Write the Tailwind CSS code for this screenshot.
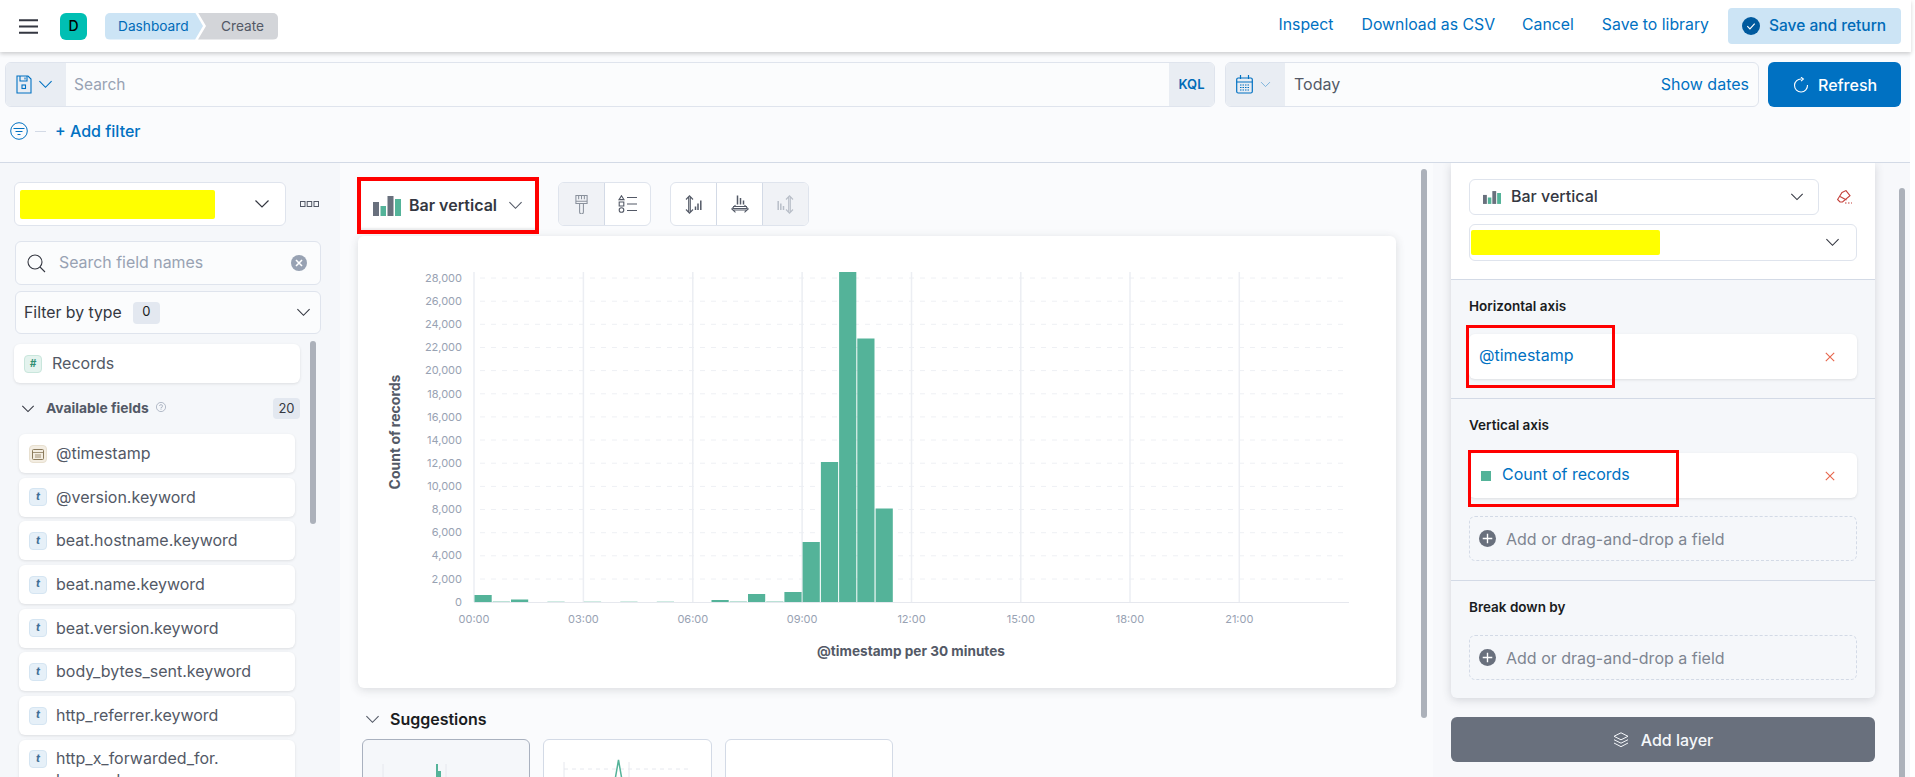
<!DOCTYPE html>
<html lang="en">
<head>
    <meta charset="UTF-8">
    <title>Create - Lens</title>
    <script src="https://cdn.jsdelivr.net/npm/@tailwindcss/browser@4"></script>
</head>
<body class="w-[1915px] h-[777px] overflow-hidden bg-white font-[family-name:Inter,sans-serif] text-[#343741]">

    <!-- icon defs -->
    <svg class="hidden">
        <symbol id="chev" viewBox="0 0 16 16"><path d="M1.5 4.5 8 11l6.5-6.5" fill="none" stroke="currentColor" stroke-width="1.2"/></symbol>
        <symbol id="barsmall" viewBox="0 0 28 20"><rect x="0" y="6" width="6" height="14" fill="#69707d"/><rect x="7.5" y="10" width="5.5" height="10" fill="#54b399"/><rect x="14.5" y="0" width="6" height="20" fill="#69707d"/><rect x="22" y="3" width="6" height="17" fill="#54b399"/></symbol>
        <symbol id="plus" viewBox="0 0 16 16"><circle cx="8" cy="8" r="8" fill="#69707d"/><path d="M8 3.5v9M3.5 8h9" stroke="#fff" stroke-width="1.3"/></symbol>
        <symbol id="cross" viewBox="0 0 10 10"><path d="M.8.8l8.4 8.4M9.2.8.8 9.2" stroke="#e7664c" stroke-width="1.1" fill="none"/></symbol>
    </svg>

    <!-- HEADER -->
    <header class="relative z-20 h-[52px] w-[1911px] bg-white shadow-[0_2px_4px_rgba(0,0,0,0.18)] flex items-center">
        <svg class="ml-[19px] w-[19px] h-[15px]" viewBox="0 0 19 15"><path d="M0 1.2h19M0 7.5h19M0 13.8h19" stroke="#343741" stroke-width="2"/></svg>
        <div class="ml-[22px] w-[27px] h-[27px] rounded-[6px] bg-[#00bfb3] flex items-center justify-center text-[14px] font-medium text-black pb-[2px]">D</div>
        <div class="ml-[18px] flex h-[27px] text-[13.7px]">
            <div class="w-[98px] bg-[#cce4f5] text-[#006bb8] rounded-l-[5px] pl-[13px] flex items-center [clip-path:polygon(0_0,92%_0,100%_50%,92%_100%,0_100%)]">Dashboard</div>
            <div class="-ml-[5px] w-[80px] bg-[#d3d5d9] text-[#535966] rounded-r-[5px] pl-[23px] flex items-center [clip-path:polygon(0_0,100%_0,100%_100%,0_100%,10%_50%)]">Create</div>
        </div>
        <nav class="ml-auto flex items-center text-[15.8px] text-[#0071c2]">
            <a class="mr-[28px] pb-[2px]">Inspect</a>
            <a class="mr-[27px] pb-[2px]">Download as CSV</a>
            <a class="mr-[28px] pb-[2px]">Cancel</a>
            <a class="mr-[19px] pb-[2px]">Save to library</a>
            <div class="w-[173px] h-[36px] mr-[10px] bg-[#cce4f5] text-[#006bb8] rounded-[4px] flex items-center pl-[14px] gap-[9px]">
                <svg class="w-[18px] h-[18px]" viewBox="0 0 17 17"><circle cx="8.5" cy="8.5" r="8.5" fill="#005a9e"/><path d="M5 8.7l2.5 2.5L12 6.2" fill="none" stroke="#fff" stroke-width="1.1"/></svg>
                <span class="text-[15.5px] font-medium">Save and return</span>
            </div>
        </nav>
    </header>

    <div class="w-[1910px] bg-[#fafbfd]">
        <!-- QUERY BAR -->
        <section class="h-[111px] border-b border-[#d3dae6] pt-[10px] pl-[5px]">
            <div class="flex h-[45px]">
                <div class="w-[1210px] flex rounded-[6px] border border-[#dfe4ed] overflow-hidden bg-[#fbfcfd]">
                    <div class="w-[60px] bg-[#e9edf3] flex items-center pl-[10px] gap-[6px] text-[#0071c2]">
                        <svg class="w-[16px] h-[19px]" viewBox="0 0 16 19" fill="none" stroke="currentColor" stroke-width="1.1"><path d="M1 1h11l3 3v14H1z"/><path d="M4 1v5h7V1M9 2.5v2"/><rect x="6" y="10" width="3.5" height="3.5"/></svg>
                        <svg class="w-[15px] h-[15px]"><use href="#chev"/></svg>
                    </div>
                    <div class="flex-1 flex items-center pl-[8px] text-[15.5px] text-[#98a2b3]">Search</div>
                    <div class="w-[45px] bg-[#e9edf3] flex items-center justify-center text-[13px] font-semibold text-[#006bb8]">KQL</div>
                </div>
                <div class="ml-[10px] w-[534px] flex rounded-[6px] border border-[#dfe4ed] overflow-hidden bg-[#fbfcfd]">
                    <div class="w-[59px] bg-[#e9edf3] flex items-center pl-[10px] gap-[7px] text-[#0071c2]">
                        <svg class="w-[17px] h-[19px]" viewBox="0 0 17 19" fill="none" stroke="currentColor" stroke-width="1.2"><rect x=".7" y="3" width="15.6" height="15" rx="1.5"/><path d="M.7 7h15.6M4.5 0v4M12.5 0v4" /><path d="M4 10h9M4 12.5h9M4 15h9" stroke-dasharray="1.5 1"/></svg>
                        <svg class="w-[11px] h-[11px] text-[#69a9d8]"><use href="#chev"/></svg>
                    </div>
                    <div class="flex-1 flex items-center pl-[9px] pb-[1px] text-[16px] text-[#535966]">Today</div>
                    <div class="flex items-center pr-[9px] pb-[1px] text-[16px] text-[#0071c2]">Show dates</div>
                </div>
                <div class="ml-[9px] w-[133px] rounded-[6px] bg-[#0071c2] text-white flex items-center pl-[25px] gap-[9px] text-[16px] font-medium">
                    <svg class="w-[16px] h-[16px]" viewBox="0 0 16 16" fill="none" stroke="currentColor" stroke-width="1.1"><path d="M8.5 2A6.5 6.5 0 1 0 14.5 8"/><path d="M8 .2 10.4 2 8 4.2"/></svg>
                    <span>Refresh</span>
                </div>
            </div>
            <div class="flex items-center mt-[14px] h-[20px] pl-[5px]">
                <svg class="w-[18px] h-[18px]" viewBox="0 0 18 18" fill="none" stroke="#0071c2" stroke-width="1"><circle cx="9" cy="9" r="8.3"/><path d="M3.5 6.5h11M5.5 9.5h7M7.5 12.5h3"/></svg>
                <div class="ml-[7px] w-[11px] h-[1px] bg-[#d3dae6]"></div>
                <span class="ml-[9px] text-[16px] font-medium text-[#0071c2]">+ Add filter</span>
            </div>
        </section>

        <main class="relative flex h-[614px] overflow-hidden">
            <!-- FIELD LIST -->
            <aside class="relative w-[340px] shrink-0 bg-[#f5f7fa] pt-[19px] pl-[14px]">
                <div class="flex items-center">
                    <div class="w-[272px] h-[44px] rounded-[6px] border border-[#dfe4ed] bg-white flex items-center pl-[5px] pr-[15px]">
                        <div class="w-[195px] h-[29px] rounded-[2px] bg-[#ffff00]"></div>
                        <svg class="ml-auto w-[16px] h-[16px] text-[#343741]"><use href="#chev"/></svg>
                    </div>
                    <svg class="ml-[14px] w-[19px] h-[6px]" viewBox="0 0 19 6" fill="none" stroke="#535966"><rect x=".5" y=".5" width="4.5" height="5"/><rect x="7.2" y=".5" width="4.5" height="5"/><rect x="14" y=".5" width="4.5" height="5"/></svg>
                </div>
                <div class="mt-[15px] ml-[1px] w-[306px] h-[44px] rounded-[6px] border border-[#dfe4ed] bg-[#fbfcfd] flex items-center pl-[11px] pr-[13px]">
                    <svg class="w-[19px] h-[19px]" viewBox="0 0 19 19" fill="none" stroke="#343741" stroke-width="1.1"><circle cx="8" cy="8" r="7"/><path d="M13 13l5 5"/></svg>
                    <span class="ml-[13px] text-[15.9px] text-[#98a2b3]">Search field names</span>
                    <svg class="ml-auto w-[16px] h-[16px]" viewBox="0 0 16 16"><circle cx="8" cy="8" r="8" fill="#98a2b3"/><path d="M5 5l6 6M11 5l-6 6" stroke="#fff" stroke-width="1.6"/></svg>
                </div>
                <div class="mt-[6px] ml-[1px] w-[306px] h-[43px] rounded-[6px] border border-[#dfe4ed] bg-[#fbfcfd] flex items-center pl-[8px] pr-[9px]">
                    <span class="text-[15.8px]">Filter by type</span>
                    <span class="ml-[11px] w-[27px] h-[22px] rounded-[4px] bg-[#e3e8f0] flex items-center justify-center text-[13px] text-[#1a1c21] pb-[2px]">0</span>
                    <svg class="ml-auto w-[15px] h-[15px]"><use href="#chev"/></svg>
                </div>
                <div class="mt-[10px] w-[286px] h-[39px] rounded-[6px] bg-white shadow-[0_1px_3px_rgba(0,0,0,0.1)] flex items-center pl-[10px] text-[16px] text-[#535966]">
                    <span class="w-[18px] h-[18px] rounded-[4px] bg-[#e4f3ee] border border-[#c9e6dc] flex items-center justify-center text-[10px] font-bold italic text-[#2f8f72]">#</span>
                    <span class="ml-[10px] pb-[1px]">Records</span>
                </div>
                <div class="mt-[15px] w-[286px] h-[21px] flex items-center">
                    <svg class="ml-[7px] w-[14px] h-[14px]"><use href="#chev"/></svg>
                    <span class="ml-[11px] text-[13.8px] font-bold text-[#535966]">Available fields</span>
                    <svg class="ml-[7px] mb-[4px] w-[10px] h-[10px]" viewBox="0 0 10 10" fill="none" stroke="#98a2b3" stroke-width=".7"><circle cx="5" cy="5" r="4.6"/><path d="M3.5 4a1.5 1.5 0 1 1 1.5 1.6V6.5M5 7.3v.7"/></svg>
                    <span class="ml-auto w-[27px] h-[21px] rounded-[4px] bg-[#e3e8f0] flex items-center justify-center text-[13px]">20</span>
                </div>
                <ul class="mt-[15px] ml-[5px] w-[276px] flex flex-col gap-[4.7px] text-[16px] text-[#535966]">
                    <li class="h-[39px] rounded-[6px] bg-white shadow-[0_1px_3px_rgba(0,0,0,0.1)] flex items-center pl-[10px]">
                        <span class="w-[18px] h-[18px] rounded-[4px] bg-[#f3ede2] border border-[#e8e0d0] flex items-center justify-center">
                            <svg class="w-[12px] h-[12px]" viewBox="0 0 12 12" fill="none" stroke="#8a7a5c"><rect x=".5" y="1.5" width="11" height="10" rx="1"/><path d="M.5 4.5h11M3 7h6M3 9h6" stroke-width=".8"/></svg>
                        </span>
                        <span class="ml-[9px] pb-[1px]">@timestamp</span>
                    </li>
                    <li class="h-[39px] rounded-[6px] bg-white shadow-[0_1px_3px_rgba(0,0,0,0.1)] flex items-center pl-[10px]">
                        <span class="w-[18px] h-[18px] rounded-[4px] bg-[#e6f0f8] border border-[#d5e5f2] flex items-center justify-center text-[11px] font-bold italic text-[#3f6f96] pb-[2px]">t</span>
                        <span class="ml-[9px] pb-[1px]">@version.keyword</span>
                    </li>
                    <li class="h-[39px] rounded-[6px] bg-white shadow-[0_1px_3px_rgba(0,0,0,0.1)] flex items-center pl-[10px]">
                        <span class="w-[18px] h-[18px] rounded-[4px] bg-[#e6f0f8] border border-[#d5e5f2] flex items-center justify-center text-[11px] font-bold italic text-[#3f6f96] pb-[2px]">t</span>
                        <span class="ml-[9px] pb-[1px]">beat.hostname.keyword</span>
                    </li>
                    <li class="h-[39px] rounded-[6px] bg-white shadow-[0_1px_3px_rgba(0,0,0,0.1)] flex items-center pl-[10px]">
                        <span class="w-[18px] h-[18px] rounded-[4px] bg-[#e6f0f8] border border-[#d5e5f2] flex items-center justify-center text-[11px] font-bold italic text-[#3f6f96] pb-[2px]">t</span>
                        <span class="ml-[9px] pb-[1px]">beat.name.keyword</span>
                    </li>
                    <li class="h-[39px] rounded-[6px] bg-white shadow-[0_1px_3px_rgba(0,0,0,0.1)] flex items-center pl-[10px]">
                        <span class="w-[18px] h-[18px] rounded-[4px] bg-[#e6f0f8] border border-[#d5e5f2] flex items-center justify-center text-[11px] font-bold italic text-[#3f6f96] pb-[2px]">t</span>
                        <span class="ml-[9px] pb-[1px]">beat.version.keyword</span>
                    </li>
                    <li class="h-[39px] rounded-[6px] bg-white shadow-[0_1px_3px_rgba(0,0,0,0.1)] flex items-center pl-[10px]">
                        <span class="w-[18px] h-[18px] rounded-[4px] bg-[#e6f0f8] border border-[#d5e5f2] flex items-center justify-center text-[11px] font-bold italic text-[#3f6f96] pb-[2px]">t</span>
                        <span class="ml-[9px] pb-[1px]">body_bytes_sent.keyword</span>
                    </li>
                    <li class="h-[39px] rounded-[6px] bg-white shadow-[0_1px_3px_rgba(0,0,0,0.1)] flex items-center pl-[10px]">
                        <span class="w-[18px] h-[18px] rounded-[4px] bg-[#e6f0f8] border border-[#d5e5f2] flex items-center justify-center text-[11px] font-bold italic text-[#3f6f96] pb-[2px]">t</span>
                        <span class="ml-[9px] pb-[1px]">http_referrer.keyword</span>
                    </li>
                    <li class="h-[60px] rounded-[6px] bg-white shadow-[0_1px_3px_rgba(0,0,0,0.1)] flex items-start pt-[10px] pl-[10px]">
                        <span class="w-[18px] h-[18px] rounded-[4px] bg-[#e6f0f8] border border-[#d5e5f2] flex items-center justify-center text-[11px] font-bold italic text-[#3f6f96] pb-[2px]">t</span>
                        <span class="ml-[9px] -mt-[3px] leading-[22px]">http_x_forwarded_for.<br>keyword</span>
                    </li>
                </ul>
                <!-- scrollbar -->
                <div class="absolute left-[310px] top-[178px] w-[6px] h-[183px] rounded-[3px] bg-[#acb1ba]"></div>
            </aside>

            <!-- WORKSPACE -->
            <section class="relative w-[1093px] shrink-0 pl-[17px] pt-[14px]">
                <div class="flex items-start">
                    <div class="w-[182px] h-[57px] border-[4px] border-[#ff0000] bg-white flex items-center pl-[12px] text-[16px] font-semibold shadow-[inset_0_-3px_2px_-1px_rgba(52,55,65,0.1)]">
                        <svg class="w-[28px] h-[20px]"><use href="#barsmall"/></svg>
                        <span class="ml-[8px] pb-[1px]">Bar vertical</span>
                        <svg class="ml-[11px] w-[15px] h-[15px] text-[#535966]"><use href="#chev"/></svg>
                    </div>
                    <div class="ml-[19px] mt-[5px] flex h-[44px] rounded-[6px] border border-[#dfe4ed] overflow-hidden bg-white">
                        <div class="w-[46px] bg-[#f0f2f6] border-r border-[#d3dae6] flex items-center justify-center">
                            <svg class="w-[13px] h-[19px]" viewBox="0 0 13 20" fill="none" stroke="#8a919c" stroke-width="1.1"><path d="M.6.6h11.8v8.4H.6zM3.5.6v4M6.5.6v4M9.5.6v4M.6 6.5h11.8M4.5 9v9a2 2 0 0 0 4 0V9"/></svg>
                        </div>
                        <div class="w-[45px] flex items-center justify-center">
                            <svg class="w-[19px] h-[18px]" viewBox="0 0 19 18" fill="none" stroke="#535966" stroke-width="1.1"><path d="M3.5.7 6 4.6H1zM1.2 7h4.6v4H1.2z"/><circle cx="3.5" cy="15" r="2.3"/><path d="M9 2.5h10M9 9h10M9 15.5h10"/></svg>
                        </div>
                    </div>
                    <div class="ml-[19px] mt-[5px] flex h-[44px] rounded-[6px] border border-[#dfe4ed] overflow-hidden bg-white">
                        <div class="w-[46px] border-r border-[#d3dae6] flex items-center justify-center">
                            <svg class="w-[17px] h-[19px]" viewBox="0 0 17 19" fill="none" stroke="#535966" stroke-width="1.1"><path d="M1 4.5 4.5.8 8 4.5M1 14.5l3.5 3.7L8 14.5M3.7 2v15M5.3 2v15"/><path d="M10.5 11.5V15M13 8.5V15M15.8 5.5V15" stroke-width="1.5"/></svg>
                        </div>
                        <div class="w-[46px] border-r border-[#d3dae6] flex items-center justify-center">
                            <svg class="w-[18px] h-[18px]" viewBox="0 0 18 18" fill="none" stroke="#535966" stroke-width="1.1"><path d="M6.5.5v9M9.5 3v6.5M12.5 5.5v4" stroke-width="1.5"/><path d="M2 11.5h14M4.5 10 .8 14l3.7 3.3M13.5 10l3.7 4-3.7 3.3M2 13.5h14M2 15h14"/></svg>
                        </div>
                        <div class="w-[45px] bg-[#f0f2f6] flex items-center justify-center">
                            <svg class="w-[17px] h-[19px]" viewBox="0 0 17 19" fill="none" stroke="#b8bec8" stroke-width="1.1"><path d="M9 4.5 12.5.8 16 4.5M9 14.5l3.5 3.7 3.500-3.700M11.700 2v15M13.300 2v15"/><path d="M1.200 6V15M3.800 8.500V15M6.500 11V15" stroke-width="1.5"/></svg>
                        </div>
                    </div>
                </div>

                <!-- chart card -->
                <div class="mt-[2px] ml-[1px] w-[1038px] h-[452px] rounded-[6px] bg-white shadow-[0_2px_10px_rgba(52,55,65,0.16)]">
                    <svg class="block w-[1038px] h-[452px] font-[family-name:Inter,sans-serif]" viewBox="358 236 1038 452">
                        <g stroke="#eef0f4" stroke-dasharray="5 6">
                            <path d="M480 278H1349M480 301.2H1349M480 324.3H1349M480 347.5H1349M480 370.6H1349M480 393.8H1349M480 416.9H1349M480 440H1349M480 463.2H1349M480 486.4H1349M480 509.5H1349M480 532.7H1349M480 555.8H1349M480 579H1349"/>
                        </g>
                        <g stroke="#eceef3" stroke-width="1.5">
                            <path d="M474 272V602M583.4 272V602M692.8 272V602M802.1 272V602M911.5 272V602M1020.8 272V602M1130 272V602M1239.3 272V602"/>
                        </g>
                        <path d="M474 602.5H1349" stroke="#e6e8ee"/>
                        <g fill="#54b399">
                            <rect x="474.5" y="595" width="17.2" height="7"/>
                            <rect x="492.7" y="601" width="17.2" height="1" opacity=".4"/>
                            <rect x="511" y="599.5" width="17.2" height="2.5"/>
                            <rect x="547.4" y="601.3" width="17.2" height=".7" opacity=".4"/>
                            <rect x="583.9" y="601.3" width="17.2" height=".7" opacity=".4"/>
                            <rect x="620.3" y="601.3" width="17.2" height=".7" opacity=".4"/>
                            <rect x="656.8" y="601.3" width="17.2" height=".7" opacity=".4"/>
                            <rect x="711.5" y="600" width="17.2" height="2"/>
                            <rect x="729.7" y="601" width="17.2" height="1" opacity=".4"/>
                            <rect x="748" y="594" width="17.2" height="8"/>
                            <rect x="766.2" y="601" width="17.2" height="1" opacity=".4"/>
                            <rect x="784.4" y="592" width="17.2" height="10"/>
                            <rect x="802.6" y="542" width="17.2" height="60"/>
                            <rect x="820.9" y="462" width="17.2" height="140"/>
                            <rect x="839.1" y="272" width="17.2" height="330"/>
                            <rect x="857.3" y="338.5" width="17.2" height="263.5"/>
                            <rect x="875.6" y="508.5" width="17.2" height="93.5"/>
                        </g>
                        <g fill="#98a2b3" font-size="11" text-anchor="end">
                            <text x="462" y="282">28,000</text>
                            <text x="462" y="305">26,000</text>
                            <text x="462" y="328">24,000</text>
                            <text x="462" y="351">22,000</text>
                            <text x="462" y="374">20,000</text>
                            <text x="462" y="398">18,000</text>
                            <text x="462" y="421">16,000</text>
                            <text x="462" y="444">14,000</text>
                            <text x="462" y="467">12,000</text>
                            <text x="462" y="490">10,000</text>
                            <text x="462" y="513">8,000</text>
                            <text x="462" y="536">6,000</text>
                            <text x="462" y="559">4,000</text>
                            <text x="462" y="583">2,000</text>
                            <text x="462" y="606">0</text>
                        </g>
                        <g fill="#98a2b3" font-size="11" text-anchor="middle">
                            <text x="474" y="623">00:00</text>
                            <text x="583.4" y="623">03:00</text>
                            <text x="692.8" y="623">06:00</text>
                            <text x="802.1" y="623">09:00</text>
                            <text x="911.5" y="623">12:00</text>
                            <text x="1020.8" y="623">15:00</text>
                            <text x="1130" y="623">18:00</text>
                            <text x="1239.3" y="623">21:00</text>
                        </g>
                        <text x="911" y="656" font-size="13.6" font-weight="700" fill="#535966" text-anchor="middle">@timestamp per 30 minutes</text>
                        <text transform="translate(400 432) rotate(-90)" font-size="14" font-weight="700" fill="#535966" text-anchor="middle">Count of records</text>
                    </svg>
                </div>

                <div class="mt-[22px] ml-[8px] flex items-center h-[18px]">
                    <svg class="w-[15px] h-[15px] text-[#535966]"><use href="#chev"/></svg>
                    <span class="ml-[10px] text-[16px] font-semibold text-[#1a1c21]">Suggestions</span>
                </div>
                <div class="mt-[11px] ml-[5px] flex gap-[13px]">
                    <div class="w-[168px] h-[80px] rounded-[6px] border border-[#a9b1bf] bg-[#f5f7fa]">
                        <svg class="w-[166px] h-[78px]" viewBox="0 0 166 78"><path d="M20 24V40M83 24V40" stroke="#e6e8ee"/><path d="M73 24h2v16h-2zM75 31h3v9h-3z" fill="#54b399"/></svg>
                    </div>
                    <div class="w-[169px] h-[80px] rounded-[6px] border border-[#d3dae6] bg-white">
                        <svg class="w-[167px] h-[78px]" viewBox="0 0 167 78"><path d="M20 22V40M85 22V40" stroke="#e6e8ee"/><path d="M20 29H145" stroke="#e6e8ee" stroke-dasharray="4 4"/><path d="M71 40l3.5-20L78 40z" fill="none" stroke="#54b399" stroke-width="1.5"/></svg>
                    </div>
                    <div class="w-[168px] h-[80px] rounded-[6px] border border-[#d3dae6] bg-white">
                        <svg class="w-[166px] h-[78px]" viewBox="0 0 166 78"><path d="M12 37.500h20M49 37.500h6M80 37.500h22M112 37.500h10M140 37.500h8" stroke="#c8cdd5" stroke-width="1" stroke-linecap="round"/></svg>
                    </div>
                </div>
                <!-- scrollbar -->
                <div class="absolute left-[1081px] top-[6px] w-[6px] h-[549px] rounded-[3px] bg-[#acb1ba]"></div>
            </section>

            <!-- CONFIG PANEL -->
            <aside class="relative w-[477px] shrink-0 bg-[#f7f8fb] pl-[18px]">
                <div class="w-[424px] rounded-b-[6px] bg-[#f5f7fa] shadow-[0_2px_10px_rgba(52,55,65,0.18)]">
                    <div class="bg-white border-b border-[#d3dae6] px-[18px] pt-[16px] pb-[18px]">
                        <div class="flex items-center">
                            <div class="w-[350px] h-[36px] rounded-[6px] border border-[#dfe4ed] flex items-center pl-[13px] pr-[14px] text-[16px] font-medium">
                                <svg class="w-[18px] h-[13px]"><use href="#barsmall"/></svg>
                                <span class="ml-[10px] pb-[2px]">Bar vertical</span>
                                <svg class="ml-auto w-[14px] h-[14px]"><use href="#chev"/></svg>
                            </div>
                            <svg class="ml-[18px] w-[16px] h-[15px]" viewBox="0 0 16 15" fill="none" stroke="#c4403a" stroke-width="1.1"><path d="M5 2.5 9 .6l4 5-7.5 6.4H3L.6 9.5z"/><path d="M3 6.5l6.5 3.5"/><path d="M8 13h7" stroke-dasharray="1.5 1.5"/></svg>
                        </div>
                        <div class="mt-[9px] w-[388px] h-[37px] rounded-[6px] border border-[#dfe4ed] flex items-center pl-[1px] pr-[16px]">
                            <div class="w-[189px] h-[25px] rounded-[2px] bg-[#ffff00]"></div>
                            <svg class="ml-auto w-[15px] h-[15px]"><use href="#chev"/></svg>
                        </div>
                    </div>
                    <div class="border-b border-[#d3dae6] px-[18px] pt-[18px] pb-[19px]">
                        <div class="text-[13.5px] leading-[16px] font-semibold text-[#1a1c21]">Horizontal axis</div>
                        <div class="relative mt-[20px] h-[45px] rounded-[6px] bg-white shadow-[0_1px_3px_rgba(0,0,0,0.1)] flex items-center pl-[10px] pr-[22px] text-[16px] text-[#0071c2]">
                            <span class="pb-[3px]">@timestamp</span>
                            <svg class="ml-auto w-[10px] h-[10px]"><use href="#cross"/></svg>
                            <div class="absolute -left-[3px] -top-[9px] w-[149px] h-[63px] border-[3px] border-[#ff0000]"></div>
                        </div>
                    </div>
                    <div class="border-b border-[#d3dae6] px-[18px] pt-[18px] pb-[19px]">
                        <div class="text-[13.5px] leading-[16px] font-semibold text-[#1a1c21]">Vertical axis</div>
                        <div class="relative mt-[20px] h-[45px] rounded-[6px] bg-white shadow-[0_1px_3px_rgba(0,0,0,0.1)] flex items-center pl-[12px] pr-[22px] text-[16px] text-[#0071c2]">
                            <span class="w-[10px] h-[10px] bg-[#54b399]"></span>
                            <span class="ml-[11px] pb-[3px]">Count of records</span>
                            <svg class="ml-auto w-[10px] h-[10px]"><use href="#cross"/></svg>
                            <div class="absolute -left-[1px] -top-[3px] w-[211px] h-[57px] border-[3px] border-[#ff0000]"></div>
                        </div>
                        <div class="mt-[18px] h-[45px] rounded-[6px] border border-dashed border-[#d3dae6] flex items-center pl-[9px] text-[16px] text-[#7e8591]">
                            <svg class="w-[17px] h-[17px]"><use href="#plus"/></svg>
                            <span class="ml-[10px]">Add or drag-and-drop a field</span>
                        </div>
                    </div>
                    <div class="px-[18px] pt-[18px] pb-[18px]">
                        <div class="text-[13.5px] leading-[16px] font-semibold text-[#1a1c21]">Break down by</div>
                        <div class="mt-[20px] h-[45px] rounded-[6px] border border-dashed border-[#d3dae6] flex items-center pl-[9px] text-[16px] text-[#7e8591]">
                            <svg class="w-[17px] h-[17px]"><use href="#plus"/></svg>
                            <span class="ml-[10px]">Add or drag-and-drop a field</span>
                        </div>
                    </div>
                </div>
                <div class="mt-[19px] w-[424px] h-[45px] rounded-[6px] bg-[#69707d] text-[#f5f7fa] flex items-center justify-center gap-[12px] text-[16px] font-medium">
                    <svg class="w-[16px] h-[16px]" viewBox="0 0 16 16" fill="none" stroke="currentColor" stroke-width="1"><path d="M8 .8 15 4.3 8 7.8 1 4.3zM1 7.7l7 3.5 7-3.5M1 11l7 3.7 7-3.7"/></svg>
                    <span>Add layer</span>
                </div>
                <!-- scrollbar -->
                <div class="absolute left-[466px] top-[25px] w-[6px] h-[589px] rounded-t-[3px] bg-[#acb1ba]"></div>
            </aside>
        </main>
    </div>
</body>
</html>
